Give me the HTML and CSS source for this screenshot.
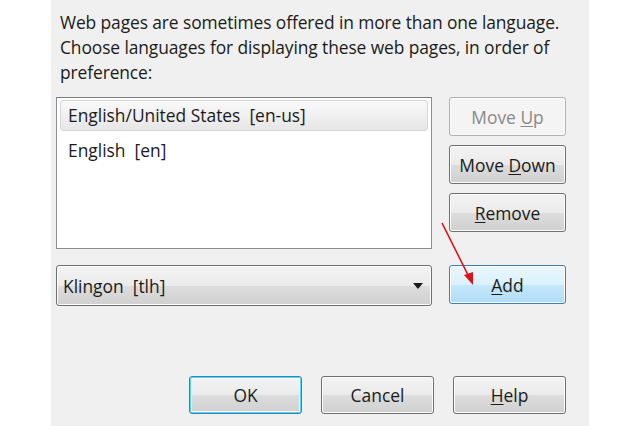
FILE: index.html
```html
<!DOCTYPE html>
<html lang="en">
  <head>
    <meta charset="UTF-8" />
    <meta name="viewport" content="width=device-width, initial-scale=1.0" />
    <title>Languages</title>
    <link rel="stylesheet" href="styles.css">
  </head>

  <body>
    <div class="dialog">
      <p class="intro">
        Web pages are sometimes offered in more than one language.<br />
        Choose languages for displaying these web pages, in order of<br />
        preference:
      </p>

      <div class="lang-grid">
        <div class="listbox">
          <div class="item selected">English/United States&nbsp; [en-us]</div>
          <div class="item">English&nbsp; [en]</div>
        </div>

        <div class="side-buttons">
          <button class="btn" disabled>Move <u>U</u>p</button>
          <button class="btn">Move <u>D</u>own</button>
          <button class="btn"><u>R</u>emove</button>
        </div>

        <div class="select">
          <span>Klingon&nbsp; [tlh]</span>
          <span class="caret"></span>
        </div>

        <button class="btn hot"><u>A</u>dd</button>
      </div>

      <div class="footer">
        <button class="btn focus">OK</button>
        <button class="btn">Cancel</button>
        <button class="btn"><u>H</u>elp</button>
      </div>

      <svg class="arrow" width="50" height="80" viewBox="0 0 50 80">
        <line x1="2" y1="2" x2="30" y2="58" stroke="#e0101a" stroke-width="1.6" />
        <polygon points="33,64 24,54 33,51" fill="#e0101a" />
      </svg>
    </div>
  </body>
</html>
```

FILE: styles.css
```css
* {
  box-sizing: border-box;
}

body {
  margin: 0;
  background: #ffffff;
  font-family: "Open Sans", "Noto Sans", sans-serif;
  font-size: 17.4px;
  color: #1b1b1b;
}

.dialog {
  position: relative;
  width: 538px;
  height: 426px;
  margin-left: 51px;
  padding: 10px 23px 0 5px;
  background: #f0f0f0;
}

.intro {
  margin: 0 0 12px 4px;
  line-height: 25px;
  letter-spacing: -0.1px;
}

.lang-grid {
  display: grid;
  grid-template-columns: 376px 117px;
  grid-template-rows: 152px 41px;
  column-gap: 17px;
  row-gap: 16px;
}

.listbox {
  background: #ffffff;
  border: 1px solid #8b8f94;
  border-top-color: #7a7e83;
  padding: 2px 3px;
}

.item {
  height: 31px;
  line-height: 29px;
  padding-left: 7px;
  border: 1px solid transparent;
  margin-bottom: 4px;
}

.item.selected {
  border-color: #d6d6d6;
  border-radius: 3px;
  background: linear-gradient(#fafafa, #e6e6e6);
}

.side-buttons {
  display: flex;
  flex-direction: column;
  row-gap: 9px;
}

.btn {
  height: 39px;
  border: 1px solid #707070;
  border-radius: 3px;
  background: linear-gradient(#f3f3f3 0%, #ebebeb 50%, #dddddd 51%, #d0d0d0 100%);
  box-shadow: inset 0 0 0 1px #fcfcfc;
  font-family: inherit;
  font-size: 17.4px;
  color: #1b1b1b;
  padding: 0;
}

.btn u {
  text-underline-offset: 2px;
}

.btn:disabled {
  border-color: #adb2b5;
  background: #f4f4f4;
  color: #8a8a8a;
}

.btn.hot {
  border-color: #3c7fb1;
  background: linear-gradient(#eaf6fd 0%, #dbf1fc 50%, #c4e8fc 51%, #b0dcf5 100%);
}

.btn.focus {
  border-color: #3c7fb1;
  box-shadow: inset 0 0 0 1px #48d8fb, inset 0 0 0 2px #fcfcfc;
}

.select {
  display: flex;
  align-items: center;
  justify-content: space-between;
  padding: 0 8px 0 6px;
  border: 1px solid #707070;
  border-radius: 3px;
  background: linear-gradient(#f3f3f3 0%, #ebebeb 50%, #dddddd 51%, #d0d0d0 100%);
  box-shadow: inset 0 0 0 1px #fcfcfc;
}

.caret {
  width: 0;
  height: 0;
  border-left: 5px solid transparent;
  border-right: 5px solid transparent;
  border-top: 6px solid #1b1b1b;
}

.footer {
  display: flex;
  justify-content: flex-end;
  column-gap: 19px;
  margin-top: 70px;
}

.footer .btn {
  width: 113px;
  height: 38px;
}

.arrow {
  position: absolute;
  left: 389px;
  top: 221px;
}
```
